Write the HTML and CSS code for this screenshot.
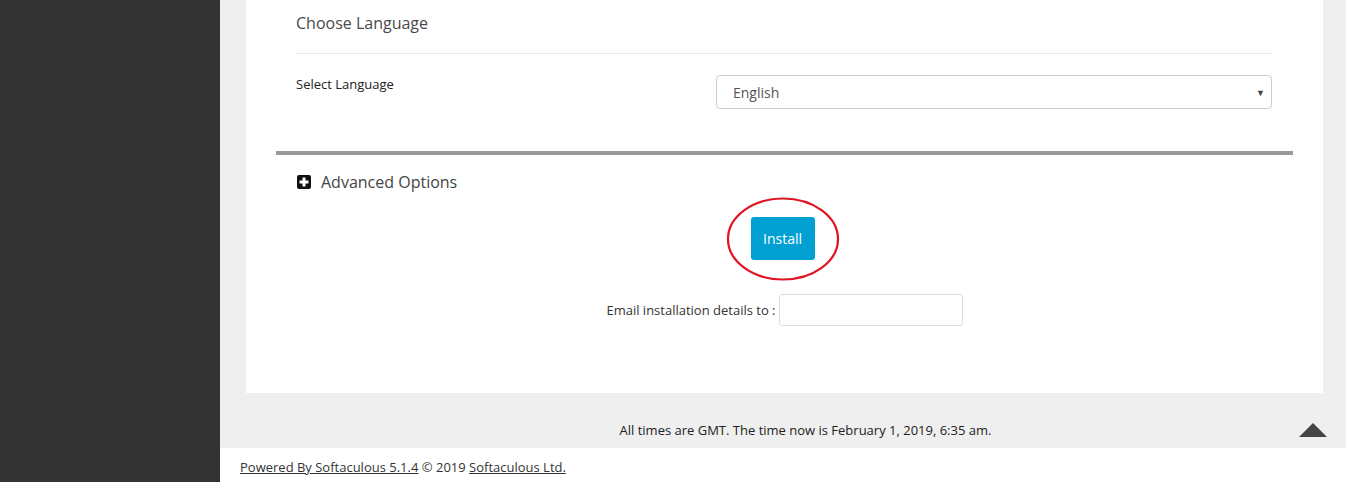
FILE: index.html
```html
<!DOCTYPE html>
<html>
<head>
<meta charset="utf-8">
<link rel="stylesheet" href="styles.css">
</head>
<body>
<div class="layout">
  <aside class="sidebar"></aside>
  <div class="main">
    <div class="content">
      <div class="card">
        <div class="section">
          <h3 class="section-title">Choose Language</h3>
          <div class="field-row">
            <label class="field-label">Select Language</label>
            <div class="select">
              <span>English</span>
              <span class="caret">▼</span>
            </div>
          </div>
        </div>
        <div class="divider"></div>
        <div class="advanced">
          <svg class="plus-icon" width="14" height="14" viewBox="0 0 14 14">
            <rect x="0" y="0" width="14" height="14" rx="2" fill="#111"/>
            <path d="M5.5 2.5h3v3h3v3h-3v3h-3v-3h-3v-3h3z" fill="#fff"/>
          </svg>
          <span>Advanced Options</span>
        </div>
        <div class="install-wrap">
          <button class="install-btn">Install</button>
          <svg class="ring" width="114" height="86" viewBox="0 0 114 86">
            <ellipse cx="57" cy="43" rx="55" ry="40.5" fill="none" stroke="#e01422" stroke-width="2.2"/>
          </svg>
        </div>
        <div class="email-row">
          <span class="email-label">Email installation details to :</span>
          <input class="email-input" type="text">
        </div>
      </div>
      <div class="timebar">
        <span>All times are GMT. The time now is February 1, 2019, 6:35 am.</span>
        <span class="to-top"></span>
      </div>
    </div>
    <footer class="footer">
      <a href="#">Powered By Softaculous 5.1.4</a> © 2019 <a href="#">Softaculous Ltd.</a>
    </footer>
  </div>
</div>
</body>
</html>
```

FILE: styles.css
```css
* { box-sizing: border-box; }
html, body { margin: 0; padding: 0; height: 100%; }
body {
  font-family: "Open Sans", "Liberation Sans", sans-serif;
  color: #333;
  font-size: 13px;
}
.layout {
  display: flex;
  height: 482px;
  overflow: hidden;
}
.sidebar {
  width: 220px;
  flex: none;
  background: #333;
}
.main {
  flex: 1;
  display: flex;
  flex-direction: column;
}
.content {
  background: #efefef;
  padding: 0 23px 0 26px;
  height: 448px;
  display: flex;
  flex-direction: column;
}
.card {
  background: #fff;
  height: 393px;
  display: flex;
  flex-direction: column;
}
.section {
  padding: 0 51px 0 50px;
}
.section-title {
  margin: 0;
  font-size: 16px;
  font-weight: 500;
  color: #4a4a4a;
  line-height: 22px;
  padding: 12px 0 19px;
  border-bottom: 1px solid #e8e8e8;
}
.field-row {
  display: grid;
  grid-template-columns: 420px 1fr;
  padding-top: 21px;
}
.field-label {
  font-size: 13px;
  font-weight: 500;
  color: #222;
  line-height: 20px;
  margin-top: -1px;
}
.select {
  height: 34px;
  border: 1px solid #ccc;
  border-radius: 4px;
  display: flex;
  align-items: center;
  justify-content: space-between;
  padding: 0 6px 0 16px;
  font-size: 14px;
  color: #555;
}
.caret {
  font-size: 9px;
  color: #444;
}
.divider {
  margin: 42px 30px 0;
  height: 4px;
  background: #999;
}
.advanced {
  display: flex;
  align-items: center;
  gap: 10px;
  padding: 16px 0 0 51px;
  font-size: 16px;
  color: #444;
  line-height: 22px;
}
.plus-icon { flex: none; }
.install-wrap {
  position: relative;
  align-self: center;
  margin-top: 24px;
  margin-left: -4px;
}
.install-btn {
  display: block;
  width: 64px;
  height: 43px;
  background: #00a0d2;
  border: none;
  border-radius: 3px;
  color: #fff;
  font-family: inherit;
  font-size: 14px;
  padding: 0;
}
.ring {
  position: absolute;
  left: -25px;
  top: -21px;
}
.email-row {
  display: flex;
  justify-content: center;
  align-items: center;
  gap: 3px;
  margin-top: 34px;
}
.email-label {
  font-size: 13px;
  font-weight: 500;
  color: #333;
}
.email-input {
  width: 184px;
  height: 32px;
  border: 1px solid #ddd;
  border-radius: 3px;
  margin: 0;
}
.timebar {
  flex: 1;
  display: flex;
  align-items: flex-end;
  justify-content: center;
  position: relative;
  padding: 0 0 9px 42px;
  font-size: 13px;
  color: #222;
}
.to-top {
  position: absolute;
  right: -4px;
  bottom: 11px;
  width: 0;
  height: 0;
  border-left: 14px solid transparent;
  border-right: 14px solid transparent;
  border-bottom: 14px solid #444;
}
.footer {
  flex: 1;
  background: #fff;
  padding: 10px 0 0 20px;
  font-size: 13px;
  color: #333;
}
.footer a { color: #333; text-decoration: underline; }
```
